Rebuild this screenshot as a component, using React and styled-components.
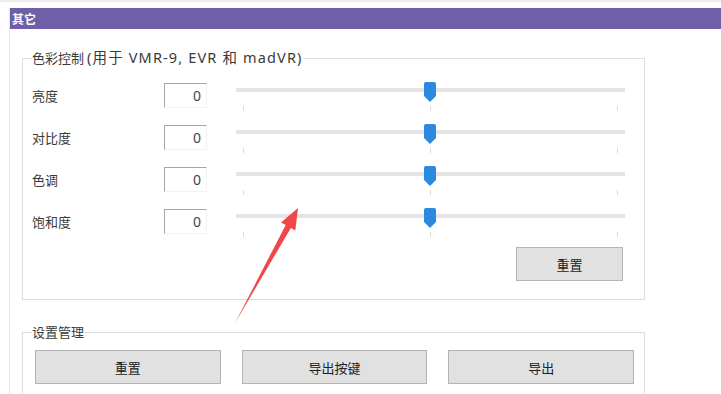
import React from "react";
import styled, { createGlobalStyle } from "styled-components";

const Global = createGlobalStyle`
  html, body { margin: 0; padding: 0; background: #fff; }
  body { font-family: "Noto Sans", "Noto Sans CJK SC", sans-serif; color: #333; }
`;

const Page = styled.div`
  position: relative;
  width: 721px;
  height: 394px;
  overflow: hidden;
  background: #fff;
  box-sizing: border-box;
  padding-top: 6px;
  border-top: 2px solid #ececec;
`;

const Panel = styled.div`
  margin-left: 9px;
  border-left: 1px solid #e6e6e6;
  height: 100%;
`;

const TitleBar = styled.div`
  height: 21px;
  background: #6f5ea8;
  color: #fff;
  font-family: "Noto Sans CJK SC", sans-serif;
  font-size: 12px;
  font-weight: 700;
  line-height: 21px;
  padding-left: 2px;
`;

const Body = styled.div`
  padding: 20px 76px 0 12px;
`;

const Group = styled.fieldset`
  margin: ${(p) => p.$mt || 0}px 0 0 0;
  padding: ${(p) => p.$pt}px ${(p) => p.$pr}px ${(p) => p.$pb}px 9px;
  border: 1px solid #dedede;
  min-width: 0;
`;

const Legend = styled.legend`
  padding: 0;
  font-size: 13px;
  line-height: 18px;
  height: 18px;
  color: #3a3a3a;
`;

const Latin = styled.span`
  font-size: 14.5px;
  line-height: 1;
  letter-spacing: 1.15px;
  margin-left: 3px;
`;

const Row = styled.div`
  display: grid;
  grid-template-columns: 132px 43px 29px 389px;
  height: 42px;
  position: relative;
`;

const Label = styled.div`
  font-size: 13px;
  line-height: 18px;
  padding-top: 12px;
  color: #3a3a3a;
`;

const NumBox = styled.div`
  margin-top: 8px;
  height: 25px;
  box-sizing: border-box;
  border-top: 1px solid #a7a7a7;
  border-left: 1px solid #a7a7a7;
  border-right: 1px solid #f2f2f2;
  border-bottom: 1px solid #f2f2f2;
  text-align: right;
  padding-right: 5px;
  font-size: 14px;
  line-height: 23px;
  color: #444;
`;

const Slider = styled.div`
  grid-column: 4;
  position: relative;
  height: 42px;
`;

const Track = styled.div`
  position: absolute;
  left: 0;
  right: 0;
  top: 13px;
  height: 4px;
  background: #e4e4e4;
`;

const Tick = styled.div`
  position: absolute;
  top: 31px;
  width: 1px;
  height: 5px;
  background: #dcdcdc;
`;

const Thumb = styled.svg`
  position: absolute;
  top: 7px;
  width: 12px;
  height: 21px;
`;

const ButtonRow = styled.div`
  display: flex;
  justify-content: flex-end;
  margin-top: 4px;
`;

const Button = styled.button`
  width: ${(p) => (p.$w ? `${p.$w}px` : "100%")};
  height: 34px;
  box-sizing: border-box;
  background: #e1e1e1;
  border: 1px solid #b4b4b4;
  font-family: "Noto Sans CJK SC", sans-serif;
  font-size: 13px;
  color: #222;
  padding: 0;
`;

const ButtonGrid = styled.div`
  display: grid;
  grid-template-columns: repeat(3, 1fr);
  column-gap: 21px;
  margin-left: 3px;
`;

const Arrow = styled.svg`
  position: absolute;
  left: 0;
  top: 0;
  pointer-events: none;
`;

const rows = ["亮度", "对比度", "色调", "饱和度"];

function SliderControl({ pos }) {
  return (
    <Slider>
      <Track />
      <Tick style={{ left: 7 }} />
      <Tick style={{ left: pos }} />
      <Tick style={{ left: 381 }} />
      <Thumb viewBox="0 0 12 21" style={{ left: pos - 6 }}>
        <path d="M2 0 H10 Q12 0 12 2 V14 L6 20 L0 14 V2 Q0 0 2 0 Z" fill="#2b8ae0" />
      </Thumb>
    </Slider>
  );
}

export default function App() {
  return (
    <Page>
      <Global />
      <Panel>
        <TitleBar>其它</TitleBar>
        <Body>
          <Group $pt={8} $pr={21} $pb={18}>
            <Legend>
              色彩控制<Latin>(用于 VMR-9, EVR 和 madVR)</Latin>
            </Legend>
            {rows.map((r) => (
              <Row key={r}>
                <Label>{r}</Label>
                <NumBox>0</NumBox>
                <SliderControl pos={194} />
              </Row>
            ))}
            <ButtonRow>
              <Button $w={107}>重置</Button>
            </ButtonRow>
          </Group>
          <Group $mt={23} $pt={9} $pr={10} $pb={40}>
            <Legend>设置管理</Legend>
            <ButtonGrid>
              <Button>重置</Button>
              <Button>导出按键</Button>
              <Button>导出</Button>
            </ButtonGrid>
          </Group>
        </Body>
      </Panel>
      <Arrow width="721" height="394" viewBox="0 0 721 394">
        <polygon
          points="298,206 281,220.6 285.7,223 235,321 290.9,225.9 295.3,228.4"
          fill="#f0484a"
        />
      </Arrow>
    </Page>
  );
}
